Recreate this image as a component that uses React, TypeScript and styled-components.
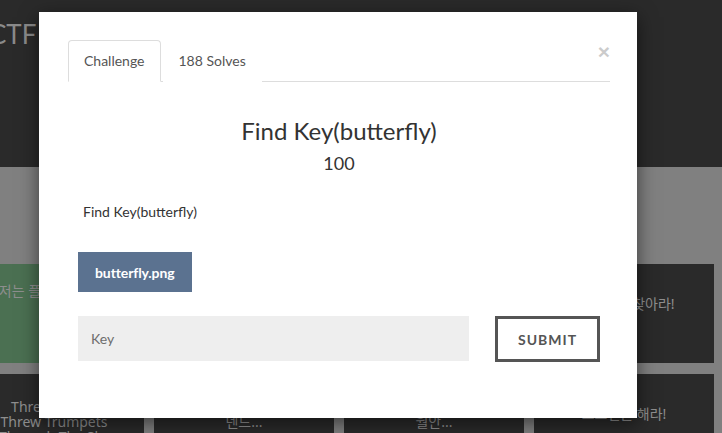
import React from 'react';
import styled, { createGlobalStyle } from 'styled-components';

const GlobalStyle = createGlobalStyle`
  html, body {
    margin: 0;
    padding: 0;
    overflow: hidden;
  }
  body {
    background: #808080;
    font-family: Lato, "Noto Sans", "Noto Sans CJK KR", sans-serif;
  }
  * {
    box-sizing: border-box;
  }
`

const Page = styled.div`
  position: relative;
  height: 433px;
  overflow: hidden;
`

const Header = styled.header`
  height: 167px;
  background: #2a2a2a;
  padding-top: 18px;
`

const Brand = styled.div`
  margin-left: -11px;
  font-size: 26px;
  line-height: 32px;
  color: #8a8a8a;
`

const Board = styled.div`
  display: flex;
  flex-direction: column;
  gap: 11px;
  padding-top: 97px;
  margin-left: -36px;
`

const CardRow = styled.div`
  display: flex;
  gap: 10px;
`

const Card = styled.div<{ $bg?: string; $top: number }>`
  flex: 0 0 180px;
  height: 99px;
  background: ${p => p.$bg || '#2a2a2a'};
  padding: ${p => p.$top}px 28px 0;
  text-align: center;
  color: #8e8e8e;
  font-family: "Noto Sans", "Noto Sans CJK KR", sans-serif;
  font-size: 14px;
  line-height: 15px;
  word-break: keep-all;
`

const Backdrop = styled.div`
  position: absolute;
  inset: 0;
  display: flex;
  justify-content: center;
  align-items: flex-start;
  padding: 12px 46px 0 0;
`

const Modal = styled.div`
  position: relative;
  width: 598px;
  height: 406px;
  background: #fff;
  box-shadow: 0 5px 18px rgba(0, 0, 0, 0.55);
  padding: 28px 27px 0 29px;
  font-family: Lato, "Noto Sans", sans-serif;
  color: #333;
`

const CloseButton = styled.button`
  position: absolute;
  top: 29px;
  right: 27px;
  border: none;
  background: none;
  padding: 0;
  font-family: "Liberation Sans", Arial, sans-serif;
  font-size: 21px;
  font-weight: bold;
  line-height: 1;
  color: #000;
  opacity: 0.2;
  cursor: pointer;
`

const TabList = styled.ul`
  display: flex;
  margin: 0;
  padding: 0;
  list-style: none;
  border-bottom: 1px solid #ddd;
`

const Tab = styled.li<{ $active?: boolean }>`
  margin: 0 2px -1px 0;
  padding: 10px 15px;
  font-size: 14px;
  line-height: 20px;
  color: #555;
  background: #fff;
  border: 1px solid ${p => (p.$active ? '#ddd' : 'transparent')};
  border-bottom-color: ${p => (p.$active ? '#fff' : 'transparent')};
  border-radius: 4px 4px 0 0;
  cursor: pointer;
`

const TabPane = styled.div`
  display: flex;
  flex-direction: column;
  align-items: flex-start;
  padding: 0 10px;
`

const Title = styled.h3`
  align-self: stretch;
  margin: 36px 0 0;
  font-size: 24px;
  font-weight: 400;
  line-height: 26px;
  text-align: center;
`

const Value = styled.h4`
  align-self: stretch;
  margin: 9px 0 0;
  font-size: 18px;
  font-weight: 400;
  line-height: 20px;
  text-align: center;
`

const Description = styled.p`
  margin: 29px 0 0 5px;
  font-size: 14px;
  line-height: 20px;
`

const FileButton = styled.a`
  display: flex;
  align-items: center;
  height: 40px;
  margin-top: 30px;
  padding: 0 17px;
  background: #5b7290;
  color: #fff;
  font-size: 14px;
  font-weight: 700;
  letter-spacing: -0.1px;
  text-decoration: none;
  cursor: pointer;
`

const KeyForm = styled.form`
  display: flex;
  align-items: flex-start;
  gap: 26px;
  margin-top: 24px;
`

const KeyInput = styled.input`
  width: 391px;
  height: 45px;
  padding: 0 13px;
  border: none;
  background: #eee;
  font-family: Lato, sans-serif;
  font-size: 14px;
  color: #555;
  outline: none;

  &::placeholder {
    color: #6d6d6d;
  }
`

const SubmitButton = styled.button`
  width: 105px;
  height: 46px;
  border: 3px solid #555;
  background: #fff;
  font-family: Lato, sans-serif;
  font-size: 14px;
  font-weight: 700;
  letter-spacing: 1px;
  color: #555;
  cursor: pointer;
`

const App: React.FC = () => {
  return (
    <Page>
      <GlobalStyle />
      <Header>
        <Brand>CTF</Brand>
      </Header>
      <Board>
        <CardRow>
          <Card $bg="#4b7052" $top={19}>저는 플래그가 아님</Card>
          <Card $top={32}>패킷을 분석하라</Card>
          <Card $top={32}>암호를 풀어라</Card>
          <Card $top={32}>숨은 키를 찾아라!</Card>
        </CardRow>
        <CardRow>
          <Card $top={25}>Three Angels Threw Trumpets Through The Sky</Card>
          <Card $top={25}>사라진 데이터와 덴드...</Card>
          <Card $top={25}>잠 못 드는 밤의 월안...</Card>
          <Card $top={32}>로그인을 해라!</Card>
        </CardRow>
      </Board>
      <Backdrop>
        <Modal>
          <CloseButton aria-label="Close">×</CloseButton>
          <TabList>
            <Tab $active>Challenge</Tab>
            <Tab>188 Solves</Tab>
          </TabList>
          <TabPane>
            <Title>Find Key(butterfly)</Title>
            <Value>100</Value>
            <Description>Find Key(butterfly)</Description>
            <FileButton>butterfly.png</FileButton>
            <KeyForm onSubmit={e => e.preventDefault()}>
              <KeyInput placeholder="Key" />
              <SubmitButton type="submit">SUBMIT</SubmitButton>
            </KeyForm>
          </TabPane>
        </Modal>
      </Backdrop>
    </Page>
  );
}
export default App;
